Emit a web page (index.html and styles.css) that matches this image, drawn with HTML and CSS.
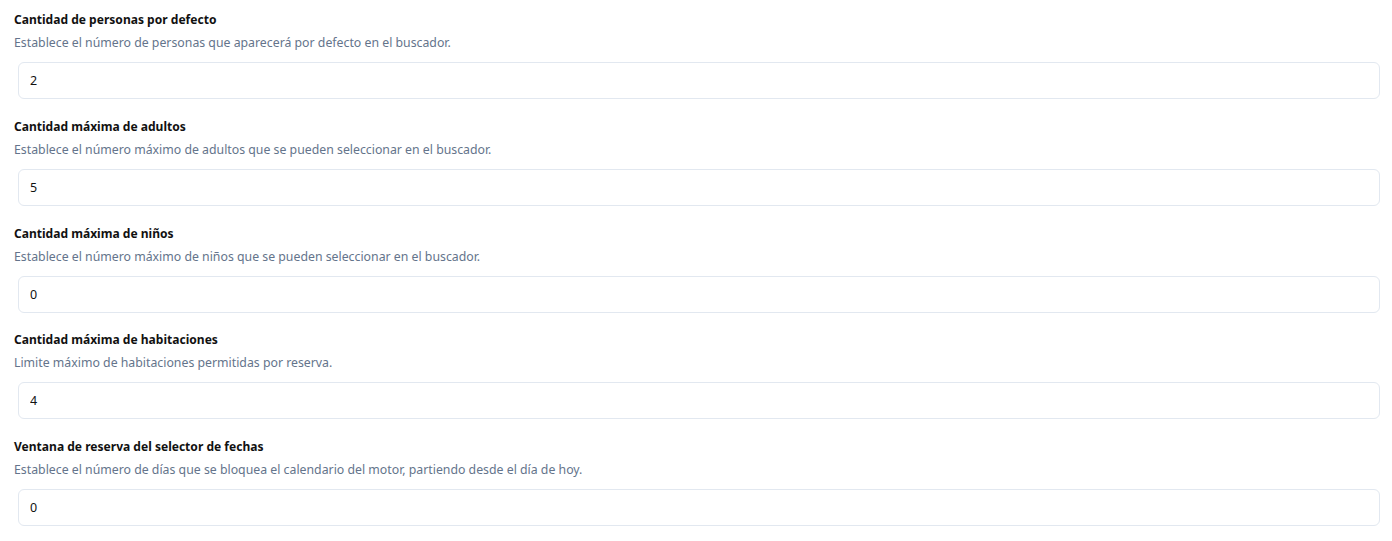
FILE: index.html
```html
<!DOCTYPE html>
<html lang="es">
<head>
<meta charset="utf-8">
<link rel="stylesheet" href="styles.css">
</head>
<body>
<div class="settings">
  <div class="field">
    <div class="label">Cantidad de personas por defecto</div>
    <div class="desc">Establece el número de personas que aparecerá por defecto en el buscador.</div>
    <input class="input" type="text" value="2">
  </div>
  <div class="field">
    <div class="label">Cantidad máxima de adultos</div>
    <div class="desc">Establece el número máximo de adultos que se pueden seleccionar en el buscador.</div>
    <input class="input" type="text" value="5">
  </div>
  <div class="field">
    <div class="label">Cantidad máxima de niños</div>
    <div class="desc">Establece el número máximo de niños que se pueden seleccionar en el buscador.</div>
    <input class="input" type="text" value="0">
  </div>
  <div class="field">
    <div class="label">Cantidad máxima de habitaciones</div>
    <div class="desc">Limite máximo de habitaciones permitidas por reserva.</div>
    <input class="input" type="text" value="4">
  </div>
  <div class="field">
    <div class="label">Ventana de reserva del selector de fechas</div>
    <div class="desc">Establece el número de días que se bloquea el calendario del motor, partiendo desde el día de hoy.</div>
    <input class="input" type="text" value="0">
  </div>
</div>
</body>
</html>
```

FILE: styles.css
```css
html, body {
  margin: 0;
  padding: 0;
  background: #ffffff;
}
body {
  font-family: "Noto Sans", "Open Sans", sans-serif;
  font-size: 13px;
  color: #111111;
}
.settings {
  padding: 10px 8px 0 14px;
  display: flex;
  flex-direction: column;
}
.field {
  display: flex;
  flex-direction: column;
  margin-bottom: 17.75px;
}
.label {
  margin-top: 1px;
  font-weight: 700;
  font-size: 12.05px;
  line-height: 18px;
  color: #111111;
}
.desc {
  margin-top: 5px;
  font-size: 12.3px;
  line-height: 18px;
  color: #64748b;
}
.input {
  margin: 10px 4px 0 4px;
  height: 37px;
  box-sizing: border-box;
  border: 1px solid #e2e8f0;
  border-radius: 6px;
  padding: 0 11px;
  font-family: inherit;
  font-size: 12.5px;
  color: #111111;
  background: #ffffff;
  outline: none;
}
```
